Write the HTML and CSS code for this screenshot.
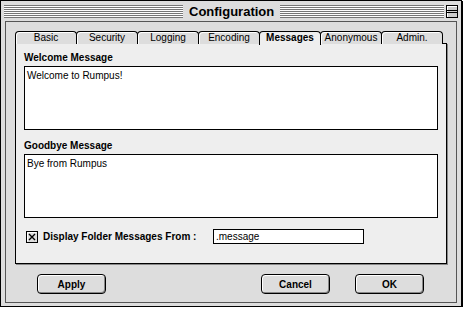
FILE: index.html
```html
<!DOCTYPE html>
<html lang="en">
<head>
    <meta charset="UTF-8">
    <title>Configuration</title>
    <link rel="stylesheet" href="styles.css">
</head>
<body>
    <div class="window">
        <div class="titlebar">
            <div class="stripes left"></div>
            <span class="title">Configuration</span>
            <div class="stripes"></div>
            <span class="collapse"><span class="collapse-line"></span></span>
        </div>
        <div class="frame">
            <div class="tabs">
                <span class="tab">Basic</span>
                <span class="tab">Security</span>
                <span class="tab">Logging</span>
                <span class="tab">Encoding</span>
                <span class="tab active">Messages</span>
                <span class="tab">Anonymous</span>
                <span class="tab">Admin.</span>
            </div>
            <div class="panel">
                <div class="label">Welcome Message</div>
                <div class="textbox">Welcome to Rumpus!</div>
                <div class="label second">Goodbye Message</div>
                <div class="textbox">Bye from Rumpus</div>
                <div class="option">
                    <svg class="checkbox" width="12" height="12" viewBox="0 0 12 12">
                        <rect x="0.5" y="0.5" width="11" height="11" fill="#ddd" stroke="#000"/>
                        <path d="M1.5 1.5h9M1.5 1.5v9" stroke="#fff"/>
                        <path d="M3 3l6 6M9 3l-6 6" stroke="#000" stroke-width="1.4"/>
                    </svg>
                    <span class="option-label">Display Folder Messages From :</span>
                    <span class="field">.message</span>
                </div>
            </div>
            <div class="buttons">
                <button class="btn">Apply</button>
                <span class="spacer"></span>
                <button class="btn">Cancel</button>
                <button class="btn ok">OK</button>
            </div>
        </div>
    </div>
</body>
</html>
```

FILE: styles.css
```css
body {
    margin: 0;
    background-color: #fff;
    font-family: "Liberation Sans", Arial, sans-serif;
}
.window {
    box-sizing: border-box;
    width: 462px;
    height: 307px;
    border: 1px solid #000;
    box-shadow: 1px 1px 0 #000;
    background-color: #ddd;
    padding: 0 4px 3px 4px;
    display: flex;
    flex-direction: column;
}
.titlebar {
    height: 20px;
    display: flex;
    align-items: center;
    margin: 0 -1px;
}
.stripes {
    flex: 1;
    height: 13px;
    background: repeating-linear-gradient(to bottom, #777 0 1px, #fff 1px 2px);
}
.stripes.left {
    flex: none;
    width: 179px;
}
.title {
    font-weight: bold;
    font-size: 13px;
    padding: 0 6px;
    color: #000;
}
.collapse {
    box-sizing: border-box;
    width: 12px;
    height: 13px;
    margin-left: 2px;
    border: 1px solid #000;
    background-color: #ccc;
    box-shadow: inset 1px 1px 0 #fff;
    display: flex;
    align-items: center;
}
.collapse-line {
    display: block;
    width: 100%;
    height: 3px;
    border-top: 1px solid #000;
    border-bottom: 1px solid #000;
    box-sizing: border-box;
}
.frame {
    flex: 1;
    border: 1px solid #555;
    background-color: #ddd;
    padding: 9px 9px 7px 9px;
    display: flex;
    flex-direction: column;
}
.tabs {
    display: flex;
    height: 13px;
    margin-bottom: -1px;
    position: relative;
    z-index: 1;
}
.tab {
    box-sizing: border-box;
    width: 62px;
    height: 13px;
    margin-right: -1px;
    border: 1px solid #000;
    border-bottom: none;
    border-radius: 4px 4px 0 0;
    background-color: #ddd;
    box-shadow: inset 1px 1px 0 #fff;
    font-size: 10px;
    line-height: 12px;
    text-align: center;
    color: #000;
}
.tab.active {
    background-color: #eee;
    font-weight: bold;
    height: 14px;
    box-shadow: none;
}
.panel {
    box-sizing: border-box;
    width: 432px;
    height: 221px;
    border: 1px solid #000;
    box-shadow: 1px 1px 0 #888;
    background-color: #eee;
    padding: 7px 8px 0 8px;
}
.label {
    font-size: 10px;
    font-weight: bold;
    line-height: 13px;
    margin-bottom: 2px;
}
.label.second {
    margin-top: 9px;
}
.textbox {
    box-sizing: border-box;
    width: 414px;
    height: 64px;
    border: 1px solid #000;
    background-color: #fff;
    padding: 2px 2px;
    font-size: 10px;
    line-height: 13px;
}
.option {
    display: flex;
    align-items: center;
    height: 15px;
    margin-top: 11px;
}
.checkbox {
    margin-left: 2px;
    margin-right: 5px;
}
.option-label {
    width: 170px;
    font-size: 10px;
    font-weight: bold;
}
.field {
    box-sizing: border-box;
    width: 151px;
    height: 15px;
    border: 1px solid #000;
    background-color: #fff;
    padding-left: 2px;
    font-size: 10px;
    line-height: 13px;
}
.buttons {
    display: flex;
    margin-top: 10px;
    padding: 0 23px 0 22px;
}
.spacer {
    flex: 1;
}
.btn {
    box-sizing: border-box;
    width: 69px;
    height: 20px;
    border: 1px solid #000;
    border-radius: 4px;
    background-color: #ddd;
    box-shadow: inset 1px 1px 0 #fff, inset -1px -1px 0 #888;
    font-family: "Liberation Sans", Arial, sans-serif;
    font-size: 10px;
    font-weight: bold;
    color: #000;
    padding: 0;
}
.btn.ok {
    margin-left: 25px;
}
```
